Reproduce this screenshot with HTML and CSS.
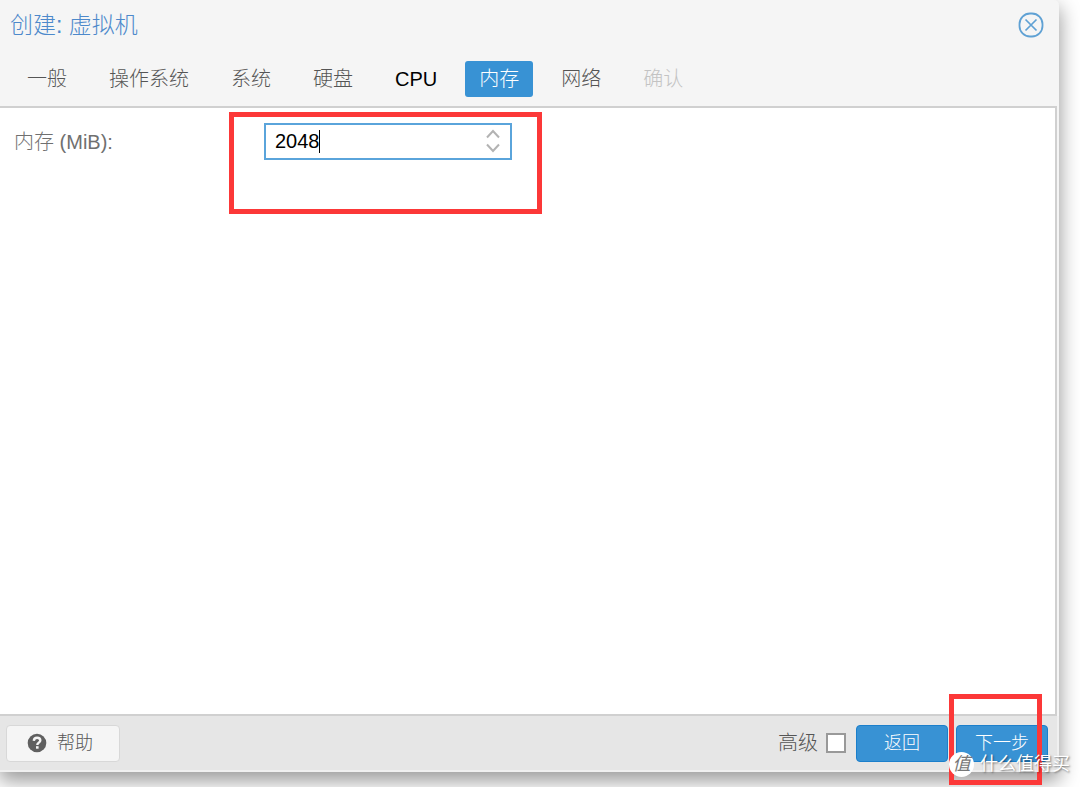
FILE: index.html
```html
<!DOCTYPE html>
<html lang="zh-CN">
<head>
<meta charset="utf-8">
<title>创建: 虚拟机</title>
<link rel="stylesheet" href="styles.css">
</head>
<body>
<main class="window">
  <header class="header">
    <div class="titlebar">
      <h1 class="title">创建: 虚拟机</h1>
      <button class="close" type="button" aria-label="关闭">
        <svg width="26" height="26" viewBox="0 0 26 26" fill="none" stroke="#5fa1d4">
          <rect x="1.5" y="1.5" width="23" height="23" rx="10.5" stroke-width="1.8"/>
          <path d="M7.500 7.500l11 11M18.500 7.500l-11 11" stroke-width="1.700"/>
        </svg>
      </button>
    </div>
    <nav class="tabs">
      <button class="tab" type="button">一般</button>
      <button class="tab" type="button">操作系统</button>
      <button class="tab" type="button">系统</button>
      <button class="tab" type="button">硬盘</button>
      <button class="tab tab-dark" type="button">CPU</button>
      <button class="tab tab-active" type="button">内存</button>
      <button class="tab" type="button">网络</button>
      <button class="tab" type="button" disabled>确认</button>
    </nav>
  </header>
  <section class="panel">
    <div class="row">
      <label class="label" for="memory">内存 (MiB):</label>
      <div class="spinner">
        <input class="input" id="memory" type="text" value="2048">
        <span class="caret"></span>
        <span class="arrows">
          <button class="arrow" type="button" aria-label="增加"><svg width="14" height="10" viewBox="0 0 14 10"><path d="M1 8.500l6-6.500 6 6.500" fill="none" stroke="#b3b3b3" stroke-width="2"/></svg></button>
          <button class="arrow" type="button" aria-label="减少"><svg width="14" height="10" viewBox="0 0 14 10"><path d="M1 1.500l6 6.500 6-6.500" fill="none" stroke="#b3b3b3" stroke-width="2"/></svg></button>
        </span>
        <span class="mark mark-field"></span>
      </div>
    </div>
  </section>
  <footer class="footer">
    <button class="button help" type="button">
      <svg width="20" height="20" viewBox="0 0 20 20"><circle cx="10" cy="10" r="9.300" fill="#606060"/><path d="M6.800 7.800C7 5.700 8.300 4.800 10.100 4.800C12 4.800 13.300 5.900 13.300 7.500C13.300 9.600 10.300 9.700 10.300 11.900" fill="none" stroke="#f5f5f5" stroke-width="2.400"/><rect x="9" y="13.200" width="2.600" height="2.500" fill="#f5f5f5"/></svg>
      帮助
    </button>
    <div class="actions">
      <label class="advanced" for="advanced">高级</label>
      <input class="check" id="advanced" type="checkbox">
      <button class="button primary" type="button">返回</button>
      <div class="next">
        <button class="button primary" type="button">下一步</button>
        <span class="mark mark-next"></span>
        <div class="watermark"><span class="badge">值</span>什么值得买</div>
      </div>
    </div>
  </footer>
</main>
</body>
</html>
```
FILE: styles.css
```css
* {
  box-sizing: border-box;
}

body {
  margin: 0;
  min-height: 100vh;
  display: flex;
  padding: 0 21px 15px 0;
  overflow: hidden;
  background: #fff;
  color: #555;
  font: 300 20px/24px "Liberation Sans", "Noto Sans CJK SC", sans-serif;
}

button,
input {
  font: inherit;
  color: inherit;
  margin: 0;
}

.window {
  flex: 1;
  display: flex;
  flex-direction: column;
  background: #f5f5f5;
  border-radius: 0 5px 4px 0;
  box-shadow: 0 8px 20px 1px rgba(0, 0, 0, 0.4);
}

.titlebar {
  display: flex;
  align-items: center;
  justify-content: space-between;
  height: 50px;
  padding: 0 15px 0 10px;
}

.title {
  margin: 0;
  font-size: 23px;
  font-weight: 300;
  color: #4d89cb;
}

.close {
  display: flex;
  padding: 0;
  border: 0;
  background: none;
}

.tabs {
  display: flex;
  gap: 14px;
  padding: 11px 13px 9px;
}

.tab {
  height: 36px;
  padding: 0 14px;
  border: 0;
  border-radius: 3px;
  background: none;
  white-space: nowrap;
}

.tab:disabled {
  color: #c3c3c3;
}

.tab-dark {
  color: #000;
}

.tab-active {
  background: #3892d4;
  color: #fff;
}

.panel {
  flex: 1;
  margin-right: 2px;
  padding: 15px 14px;
  background: #fff;
  border: solid #d0d0d0;
  border-width: 2px 2px 2px 0;
}

.row {
  display: flex;
  align-items: center;
}

.label {
  width: 250px;
  color: #707070;
}

.spinner {
  position: relative;
  width: 248px;
}

.input {
  display: block;
  width: 100%;
  height: 37px;
  padding: 0 40px 0 9px;
  border: 2px solid #5aa4db;
  border-radius: 0;
  background: #fff;
  color: #000;
}

.caret {
  position: absolute;
  left: 55px;
  top: 7px;
  width: 1px;
  height: 23px;
  background: #000;
}

.arrows {
  position: absolute;
  right: 12px;
  top: 6px;
  display: grid;
  gap: 4px;
}

.arrow {
  display: flex;
  padding: 0;
  border: 0;
  background: none;
}

.mark {
  position: absolute;
  border: 5px solid #fc3838;
  pointer-events: none;
}

.mark-field {
  left: -35px;
  top: -11px;
  width: 313px;
  height: 102px;
}

.footer {
  display: flex;
  align-items: center;
  justify-content: space-between;
  height: 56px;
  padding: 0 9px 0 6px;
  background: #e6e6e6;
  border-bottom: 2px solid #f0f0f0;
  border-right: 2px solid #f0f0f0;
  border-radius: 0 0 4px 0;
}

.button {
  height: 37px;
  border: 1px solid #d8d8d8;
  border-radius: 4px;
  font-size: 18px;
}

.help {
  display: flex;
  align-items: center;
  justify-content: center;
  gap: 10px;
  width: 114px;
  padding: 0 6px 0 0;
  background: #f5f5f5;
}

.actions {
  display: flex;
  align-items: center;
}

.check {
  appearance: none;
  width: 20px;
  height: 20px;
  margin: 0 10px 0 8px;
  border: 2px solid #999;
  background: #fff;
}

.primary {
  width: 92px;
  padding: 0;
  background: #3892d4;
  border: 1px solid #1b7fcb;
  color: #fff;
}

.next {
  position: relative;
  display: flex;
  margin-left: 8px;
}

.mark-next {
  left: -7px;
  top: -31px;
  width: 93px;
  height: 91px;
}

.watermark {
  position: absolute;
  left: -7px;
  top: 27px;
  display: flex;
  align-items: center;
  gap: 6px;
  color: #fff;
  font-size: 18px;
  font-weight: 400;
  white-space: nowrap;
  text-shadow: 1px 1px 2px rgba(0, 0, 0, 0.5);
}

.badge {
  width: 25px;
  height: 25px;
  border-radius: 50%;
  background: #fff;
  color: #777;
  font-style: italic;
  line-height: 24px;
  text-align: center;
  text-shadow: none;
}
```
